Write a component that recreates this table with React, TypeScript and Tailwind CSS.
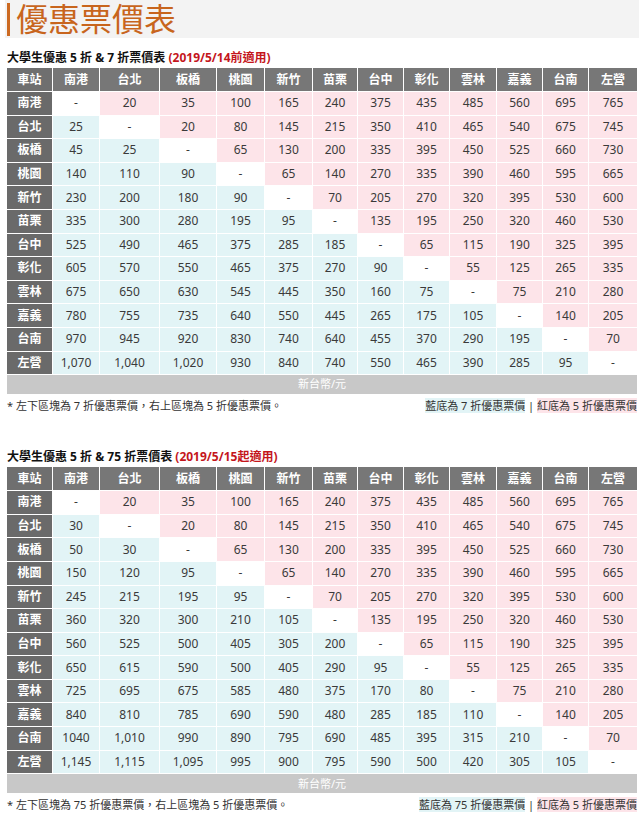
const STATIONS = ["南港", "台北", "板橋", "桃園", "新竹", "苗栗", "台中", "彰化", "雲林", "嘉義", "台南", "左營"]

const TABLE_A = [
  ["-", "20", "35", "100", "165", "240", "375", "435", "485", "560", "695", "765"],
  ["25", "-", "20", "80", "145", "215", "350", "410", "465", "540", "675", "745"],
  ["45", "25", "-", "65", "130", "200", "335", "395", "450", "525", "660", "730"],
  ["140", "110", "90", "-", "65", "140", "270", "335", "390", "460", "595", "665"],
  ["230", "200", "180", "90", "-", "70", "205", "270", "320", "395", "530", "600"],
  ["335", "300", "280", "195", "95", "-", "135", "195", "250", "320", "460", "530"],
  ["525", "490", "465", "375", "285", "185", "-", "65", "115", "190", "325", "395"],
  ["605", "570", "550", "465", "375", "270", "90", "-", "55", "125", "265", "335"],
  ["675", "650", "630", "545", "445", "350", "160", "75", "-", "75", "210", "280"],
  ["780", "755", "735", "640", "550", "445", "265", "175", "105", "-", "140", "205"],
  ["970", "945", "920", "830", "740", "640", "455", "370", "290", "195", "-", "70"],
  ["1,070", "1,040", "1,020", "930", "840", "740", "550", "465", "390", "285", "95", "-"],
]

const TABLE_B = [
  ["-", "20", "35", "100", "165", "240", "375", "435", "485", "560", "695", "765"],
  ["30", "-", "20", "80", "145", "215", "350", "410", "465", "540", "675", "745"],
  ["50", "30", "-", "65", "130", "200", "335", "395", "450", "525", "660", "730"],
  ["150", "120", "95", "-", "65", "140", "270", "335", "390", "460", "595", "665"],
  ["245", "215", "195", "95", "-", "70", "205", "270", "320", "395", "530", "600"],
  ["360", "320", "300", "210", "105", "-", "135", "195", "250", "320", "460", "530"],
  ["560", "525", "500", "405", "305", "200", "-", "65", "115", "190", "325", "395"],
  ["650", "615", "590", "500", "405", "290", "95", "-", "55", "125", "265", "335"],
  ["725", "695", "675", "585", "480", "375", "170", "80", "-", "75", "210", "280"],
  ["840", "810", "785", "690", "590", "480", "285", "185", "110", "-", "140", "205"],
  ["1040", "1,010", "990", "890", "795", "690", "485", "395", "315", "210", "-", "70"],
  ["1,145", "1,115", "1,095", "995", "900", "795", "590", "500", "420", "305", "105", "-"],
]

const FONT = { fontFamily: '"Noto Sans", "Noto Sans CJK TC", sans-serif' }

function cellBg(r: number, c: number) {
  if (r === c) return "bg-white"
  return r > c ? "bg-[#e2f4f6]" : "bg-[#fde4e9]"
}

function FareTable({ title, note, data, footnote, blueLabel }: {
  title: string
  note: string
  data: string[][]
  footnote: string
  blueLabel: string
}) {
  return (
    <div className="flex flex-col">
      <div className="h-[20px] flex items-center text-[12px] font-bold text-[#111] leading-none">
        {title}&nbsp;<span className="text-[#c4161c]">{note}</span>
      </div>
      <div className="grid grid-cols-[45px_46px_59px_56px_47px_47px_44px_45px_45px_46px_45px_45px_48px] gap-px bg-white text-[12px] leading-none">
        <div className="h-[23px] bg-[#6f6f6f] text-white font-bold flex items-center justify-center">車站</div>
        {STATIONS.map((s) => (
          <div key={s} className="h-[23px] bg-[#777777] text-white font-bold flex items-center justify-center">{s}</div>
        ))}
        {data.map((row, r) => (
          <>
            <div key={`s${r}`} className="h-[22.6px] bg-[#6a6a6a] text-white font-bold flex items-center justify-center">{STATIONS[r]}</div>
            {row.map((v, c) => (
              <div key={`${r}-${c}`} className={`h-[22.6px] ${cellBg(r, c)} text-[#3a3a3a] flex items-center justify-center`}>{v}</div>
            ))}
          </>
        ))}
      </div>
      <div className="mt-px h-[19px] bg-[#c8c8c8] text-white text-[11px] flex items-center justify-center">新台幣/元</div>
      <div className="mt-[4px] flex items-center justify-between text-[11px] text-[#333] leading-[16px]">
        <span>{footnote}</span>
        <span>
          <span className="bg-[#e2f4f6]">{blueLabel}</span> | <span className="bg-[#fde4e9]">紅底為 5 折優惠票價</span>
        </span>
      </div>
    </div>
  )
}

export default function App() {
  return (
    <div className="w-[644px] min-h-[819px] bg-white px-[7px]" style={FONT}>
      <div className="h-[38px] bg-[#f3f3f3] flex items-center gap-[6px] -mx-[2px] pl-[2px]">
        <div className="w-[3px] h-[33px] bg-[#cc6a22]" />
        <div className="text-[32px] leading-[38px] text-[#c8651d]">優惠票價表</div>
      </div>
      <div className="mt-[10px]">
        <FareTable
          title="大學生優惠 5 折 & 7 折票價表"
          note="(2019/5/14前適用)"
          data={TABLE_A}
          footnote="* 左下區塊為 7 折優惠票價，右上區塊為 5 折優惠票價。"
          blueLabel="藍底為 7 折優惠票價"
        />
      </div>
      <div className="mt-[33px]">
        <FareTable
          title="大學生優惠 5 折 & 75 折票價表"
          note="(2019/5/15起適用)"
          data={TABLE_B}
          footnote="* 左下區塊為 75 折優惠票價，右上區塊為 5 折優惠票價。"
          blueLabel="藍底為 75 折優惠票價"
        />
      </div>
    </div>
  )
}
